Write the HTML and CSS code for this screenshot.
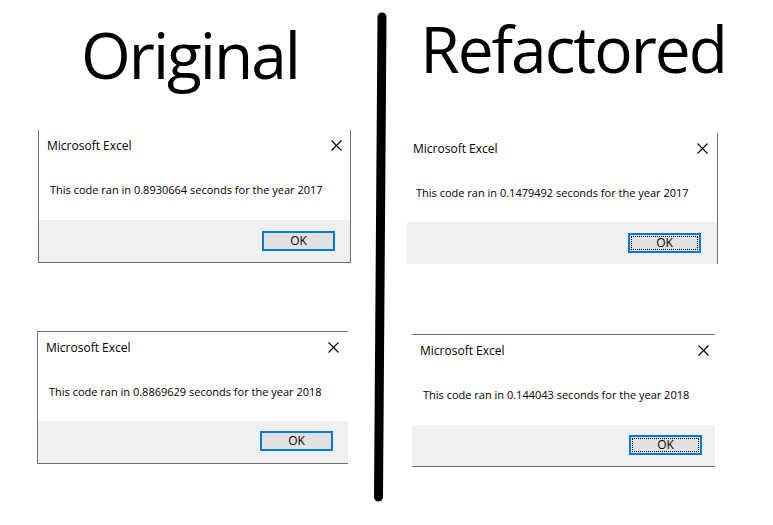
FILE: index.html
```html
<!DOCTYPE html>
<html>
<head>
<meta charset="utf-8">
<title>Original vs Refactored</title>
<link rel="stylesheet" href="styles.css">
</head>
<body>
<div class="page">
  <section class="col col-left">
    <h1 class="heading heading-left">Original</h1>
    <div class="dialog d1">
      <div class="dlg-head"><span class="dlg-title">Microsoft Excel</span><svg class="dlg-close" width="11" height="11" viewBox="0 0 11 11"><path d="M0.5 0.5L10.5 10.5M10.5 0.5L0.5 10.5" stroke="#000" stroke-width="1.1" fill="none"/></svg></div>
      <div class="dlg-msg">This code ran in 0.8930664 seconds for the year 2017</div>
      <div class="dlg-foot"><button class="dlg-ok">OK</button></div>
    </div>
    <div class="dialog d3">
      <div class="dlg-head"><span class="dlg-title">Microsoft Excel</span><svg class="dlg-close" width="11" height="11" viewBox="0 0 11 11"><path d="M0.5 0.5L10.5 10.5M10.5 0.5L0.5 10.5" stroke="#000" stroke-width="1.1" fill="none"/></svg></div>
      <div class="dlg-msg">This code ran in 0.8869629 seconds for the year 2018</div>
      <div class="dlg-foot"><button class="dlg-ok">OK</button></div>
    </div>
  </section>
  <div class="divider"><svg width="22" height="525" viewBox="0 0 22 525"><line x1="12" y1="17" x2="8.5" y2="497" stroke="#000" stroke-width="9" stroke-linecap="round"/></svg></div>
  <section class="col col-right">
    <h1 class="heading heading-right">Refactored</h1>
    <div class="dialog d2">
      <div class="dlg-head"><span class="dlg-title">Microsoft Excel</span><svg class="dlg-close" width="11" height="11" viewBox="0 0 11 11"><path d="M0.5 0.5L10.5 10.5M10.5 0.5L0.5 10.5" stroke="#000" stroke-width="1.1" fill="none"/></svg></div>
      <div class="dlg-msg">This code ran in 0.1479492 seconds for the year 2017</div>
      <div class="dlg-foot"><button class="dlg-ok focus">OK</button></div>
    </div>
    <div class="dialog d4">
      <div class="dlg-head"><span class="dlg-title">Microsoft Excel</span><svg class="dlg-close" width="11" height="11" viewBox="0 0 11 11"><path d="M0.5 0.5L10.5 10.5M10.5 0.5L0.5 10.5" stroke="#000" stroke-width="1.1" fill="none"/></svg></div>
      <div class="dlg-msg">This code ran in 0.144043 seconds for the year 2018</div>
      <div class="dlg-foot"><button class="dlg-ok focus">OK</button></div>
    </div>
  </section>
</div>
</body>
</html>
```

FILE: styles.css
```css
* { box-sizing: border-box; margin: 0; padding: 0; }
html, body { width: 773px; height: 525px; background: #fff; overflow: hidden; }
body { font-family: "Open Sans", "Noto Sans", sans-serif; color: #000; }

.page {
  display: grid;
  grid-template-columns: 370px 22px 381px;
  height: 525px;
}

.col { display: flex; flex-direction: column; align-items: flex-start; }

.heading {
  align-self: stretch;
  text-align: center;
  font-weight: 400;
  font-size: 64px;
  line-height: 64px;
  letter-spacing: -2px;
  color: #000;
}
.heading-left { height: 130px; padding-top: 23px; padding-left: 10px; }
.heading-right { height: 133px; padding-top: 17px; padding-right: 19px; }

.divider svg { display: block; }

.dialog {
  display: flex;
  flex-direction: column;
  background: #fff;
  border: 0 solid #707070;
}

.dlg-head {
  height: 30px;
  display: flex;
  align-items: center;
  justify-content: space-between;
  padding: 0 var(--x-pr) 0 var(--t-pl);
  font-size: 12px;
  color: #000;
}
.dlg-close { display: block; }

.dlg-msg {
  padding-left: var(--m-pl);
  margin-top: 22px;
  font-size: 11px;
  line-height: 16px;
  color: #000;
}

.dlg-foot {
  margin-top: auto;
  height: var(--f-h);
  background: #f0f0f0;
  display: flex;
  justify-content: flex-end;
  align-items: flex-start;
  padding: var(--ok-t) var(--ok-r) 0 0;
}

.dlg-ok {
  width: 73px;
  height: 20px;
  border: 2px solid #0078d7;
  background: #e1e1e1;
  font-family: inherit;
  font-size: 12px;
  line-height: 14px;
  color: #000;
}
.dlg-ok.focus { outline: 1px dotted #000; outline-offset: -4px; }

.d1 {
  margin-left: 38px; width: 313px; height: 133px;
  border-left-width: 1px; border-right-width: 1px; border-bottom-width: 1px;
  --t-pl: 8px; --x-pr: 8px; --m-pl: 11px; --f-h: 42px; --ok-t: 11px; --ok-r: 15px;
}
.d3 {
  margin-left: 37px; margin-top: 68px; width: 311px; height: 133px;
  border-left-width: 1px; border-top-width: 1px; border-bottom-width: 1px;
  --t-pl: 8px; --x-pr: 9px; --m-pl: 11px; --f-h: 42px; --ok-t: 10px; --ok-r: 15px;
}
.d2 {
  margin-left: 15px; width: 311px; height: 131px;
  border-right-width: 1px;
  --t-pl: 6px; --x-pr: 9px; --m-pl: 9px; --f-h: 42px; --ok-t: 11px; --ok-r: 16px;
}
.d4 {
  margin-left: 20px; margin-top: 70px; width: 303px; height: 133px;
  border-top-width: 1px; border-bottom-width: 1px;
  --t-pl: 8px; --x-pr: 6px; --m-pl: 11px; --f-h: 41px; --ok-t: 10px; --ok-r: 13px;
}
```
